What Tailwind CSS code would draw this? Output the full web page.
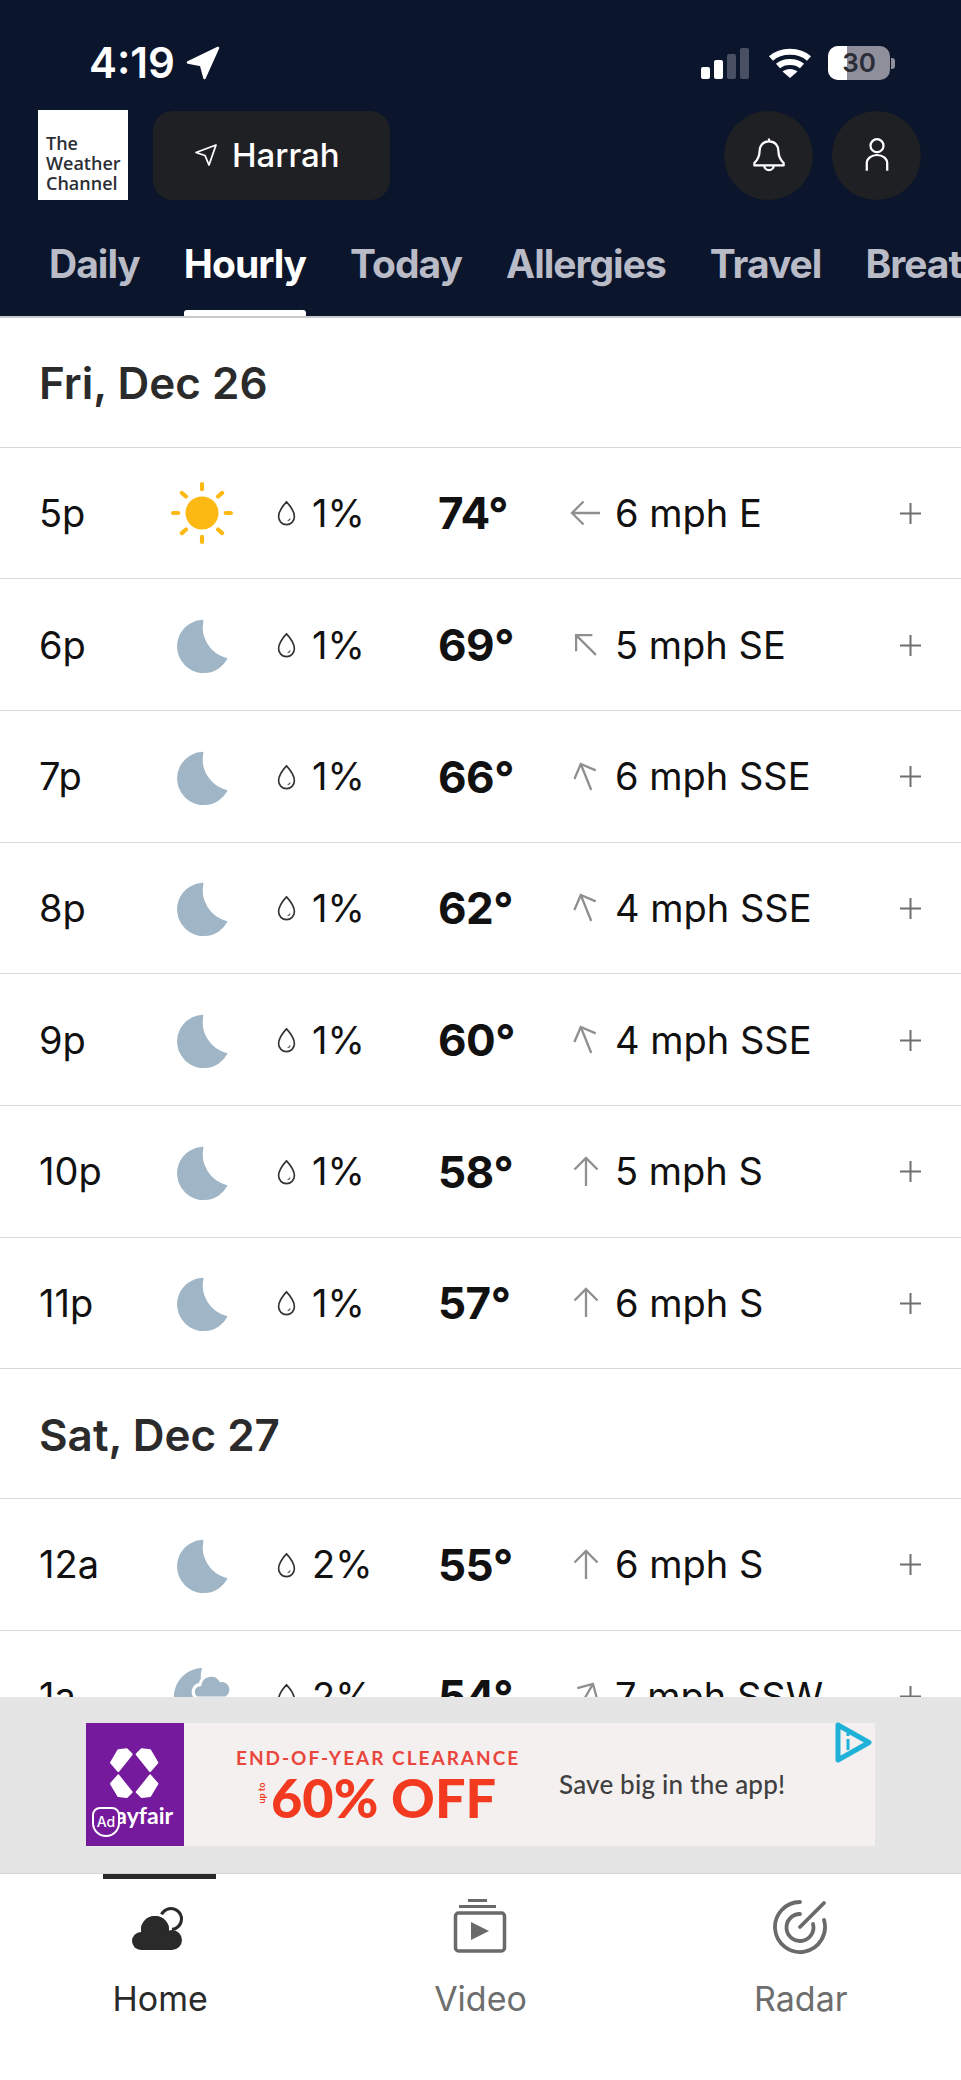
<!DOCTYPE html>
<html lang="en">
<head>
  <meta charset="UTF-8" />
  <meta name="viewport" content="width=device-width, initial-scale=1" />
  <title>Hourly Forecast</title>
  <script src="https://cdn.jsdelivr.net/npm/@tailwindcss/browser@4"></script>
</head>
<body class="bg-white font-['Inter',sans-serif]">
  <svg class="hidden">
    <symbol id="moon" viewBox="-3 -2 65 65">
      <path d="M30 5A27 27 0 1 0 55 45A34 34 0 0 1 30 5Z" fill="#a0b6c6" stroke="#a0b6c6" stroke-width="2" stroke-linejoin="round" />
    </symbol>
    <symbol id="sun" viewBox="2 2 60 60">
      <circle cx="32" cy="32" r="16" fill="#fdb913" />
      <g stroke="#fdb913" stroke-width="4" stroke-linecap="round">
        <path d="M32 4v5M32 55v5M4 32h5M55 32h5M12.5 12.5l4 3.5M47.500 48l4 3.500M12.500 51.500l4-3.500M47.500 16l4-3.500" />
      </g>
    </symbol>
    <symbol id="partly" viewBox="0 0 60 60">
      <path d="M30 3A28 28 0 1 0 55 45A34 34 0 0 1 30 3Z" fill="#a0b6c6" />
      <path d="M25 32a7 7 0 0 1 3-13a11 11 0 0 1 20-4a9 9 0 0 1 5 17Z" fill="#a0b6c6" stroke="#fff" stroke-width="3" />
    </symbol>
    <symbol id="drop" viewBox="0 0 20 28">
      <path d="M10 2C10 2 1.500 11 1.500 18a8.500 8.500 0 0 0 17 0C18.500 11 10 2 10 2Z" fill="none" stroke="#333" stroke-width="1.800" />
      <path d="M14 20q-.8 2-2.800 2.400" fill="none" stroke="#555" stroke-width="1.200" />
    </symbol>
    <symbol id="wind" viewBox="0 0 32 32">
      <path d="M16 2v28M4.500 13.500L16 2l11.500 11.500" fill="none" stroke="#8f8f8f" stroke-width="2.300" />
    </symbol>
  </svg>

  <div class="h-[2080px] w-[961px] overflow-hidden flex flex-col">
    <header class="bg-[#0b152b] pt-[46px] h-[318px] shrink-0 border-b-2 border-[#c9cace]">
      <div class="h-[34px] flex items-center justify-between pl-[89px] pr-[66px]">
        <div class="flex items-center gap-[11px] text-white">
          <span class="text-[42px] font-semibold leading-none">4:19</span>
          <svg class="w-[34px] h-[34px]" viewBox="0 0 34 34"><path d="M32 2L2 16.500L15 19L18.500 32Z" fill="#fff" stroke="#fff" stroke-width="2.500" stroke-linejoin="round" /></svg>
        </div>
        <div class="flex items-center gap-[16px]">
          <div class="flex items-end gap-[4px] h-[31px] mr-[3px]">
            <span class="w-[9px] h-[12px] rounded-[2px] bg-white"></span>
            <span class="w-[9px] h-[19px] rounded-[2px] bg-white"></span>
            <span class="w-[9px] h-[25px] rounded-[2px] bg-[#4a5063]"></span>
            <span class="w-[9px] h-[31px] rounded-[2px] bg-[#4a5063]"></span>
          </div>
          <svg class="w-[44px] h-[32px]" viewBox="0 0 44 32">
            <path d="M3 11.500C13 2.500 31 2.500 41 11.500M10 19C16 13.500 28 13.500 34 19" fill="none" stroke="#fff" stroke-width="6" />
            <path d="M22 31L14.500 24.500C18.500 21 25.500 21 29.500 24.500Z" fill="#fff" />
          </svg>
          <div class="flex items-center gap-[1px]">
            <div class="relative w-[62px] h-[34px] rounded-[10px] overflow-hidden bg-[#8e8f9a] flex items-center justify-center">
              <span class="absolute left-0 top-0 bottom-0 w-[19px] bg-white"></span>
              <span class="relative text-[#2a2c38] text-[26px] font-semibold leading-none">30</span>
            </div>
            <span class="w-[4px] h-[11px] rounded-r-[3px] bg-[#8e8f9a]"></span>
          </div>
        </div>
      </div>

      <div class="mt-[30px] h-[90px] flex items-center justify-between pl-[38px] pr-[40px]">
        <div class="flex items-center gap-[25px]">
          <div class="w-[90px] h-[90px] bg-white flex flex-col justify-end pl-[8px] pb-[7px] font-['Open_Sans',sans-serif] font-semibold text-[18px] leading-[20px] text-[#2b2e36]">
            <span>The</span>
            <span>Weather</span>
            <span>Channel</span>
          </div>
          <div class="w-[237px] h-[89px] rounded-[20px] bg-[#1f2024] flex items-center pl-[41px] gap-[14px] text-white">
            <svg class="w-[24px] h-[24px]" viewBox="0 0 24 24"><path d="M22 2L2 9.500L11 12.500L15 22Z" fill="none" stroke="#fff" stroke-width="1.800" stroke-linejoin="round" /></svg>
            <span class="text-[33px] font-medium leading-none">Harrah</span>
          </div>
        </div>
        <div class="flex items-center gap-[19px]">
          <div class="w-[89px] h-[89px] rounded-full bg-[#1f2024] flex items-center justify-center">
            <svg class="w-[34px] h-[36px]" viewBox="0 0 36 38" fill="none" stroke="#fff" stroke-width="2.400" stroke-linejoin="round">
              <path d="M18 1.500v3M18 4.500c-6.500 0-10 4.800-10 10.500c0 6-2 9-5.500 12.500v2.500h31v-2.500C30 24 28 21 28 15C28 9.300 24.500 4.500 18 4.500Z" />
              <path d="M13 30a5 5 0 0 0 10 0" />
            </svg>
          </div>
          <div class="w-[89px] h-[89px] rounded-full bg-[#1f2024] flex items-center justify-center">
            <svg class="w-[26px] h-[36px]" viewBox="0 0 28 38" fill="none" stroke="#fff" stroke-width="2.400">
              <circle cx="14" cy="9" r="7" />
              <path d="M3 36V28a11 9 0 0 1 22 0V36" />
            </svg>
          </div>
        </div>
      </div>

      <nav class="flex gap-[44px] pl-[49px] h-[116px] text-[39px] font-bold whitespace-nowrap overflow-hidden text-[#b9bcc7] tracking-[-1px]">
        <span class="pt-[12px] h-full flex items-center">Daily</span>
        <span class="relative pt-[12px] h-full flex items-center text-white">Hourly
          <span class="absolute left-0 right-0 bottom-0 h-[6px] rounded-t-[3px] bg-white"></span>
        </span>
        <span class="pt-[12px] h-full flex items-center">Today</span>
        <span class="pt-[12px] h-full flex items-center">Allergies</span>
        <span class="pt-[12px] h-full flex items-center">Travel</span>
        <span class="pt-[12px] h-full flex items-center">Breathing</span>
      </nav>
    </header>

    <main id="forecast" class="flex-1 min-h-0 overflow-hidden"></main>

    <aside class="relative h-[176px] shrink-0 bg-[#e5e5e6] pt-[26px] pl-[86px]">
      <div class="w-[789px] h-[123px] bg-[#f4f0f0] flex items-center">
        <div class="relative w-[98px] h-full bg-[#751a9c] shrink-0">
          <svg class="absolute left-[22px] top-[23px] w-[53px] h-[55px]" viewBox="0 0 53 55" fill="#fff" stroke="#fff" stroke-width="2" stroke-linejoin="round">
            <path d="M23.700 8.300L10.300 25L3 16.700L10.300 4.300L18.700 3.300Z" />
            <path d="M28.700 8.300L42.100 25L49.400 16.700L42.100 4.300L33.700 3.300Z" />
            <path d="M23.700 46.100L10.300 29.400L3 37.700L10.300 50.100L18.700 51.100Z" />
            <path d="M28.700 46.100L42.100 29.400L49.400 37.700L42.100 50.100L33.700 51.100Z" />
          </svg>
          <span class="absolute left-[11px] top-[78px] text-white font-['Lato',sans-serif] font-bold text-[23px] leading-[28px]">wayfair</span>
          <div class="absolute left-[6px] top-[84px] w-[28px] h-[30px] rounded-t-[8px] rounded-b-[14px] border-2 border-white bg-[#751a9c] flex items-center justify-center">
            <span class="text-white text-[14px] font-medium leading-none">Ad</span>
          </div>
        </div>
        <div class="w-[375px] pl-[52px] shrink-0 font-['Lato',sans-serif]">
          <div class="text-[19px] font-bold tracking-[2px] leading-[22px] mt-[4px] text-[#e9463d] whitespace-nowrap">END-OF-YEAR CLEARANCE</div>
          <div class="flex items-center mt-[1px] pl-[20px] text-[#f23a20]">
            <span class="-rotate-90 w-[10px] text-[9px] leading-none whitespace-nowrap font-bold">up to</span>
            <span class="text-[54px] font-black leading-[56px] ml-[5px] whitespace-nowrap">60% OFF</span>
          </div>
        </div>
        <span class="font-['Lato',sans-serif] text-[26px] tracking-[0.2px] text-[#3f3f3f] font-medium whitespace-nowrap">Save big in the app!</span>
      </div>
      <svg class="absolute left-[835px] top-[25px] w-[38px] h-[42px]" viewBox="0 0 38 42" fill="none" stroke="#1fb2d8">
        <path d="M3 3L34 20.500L3 38Z" stroke-width="5" stroke-linejoin="round" />
        <path d="M13 17v11M13 11v3" stroke-width="3" />
      </svg>
    </aside>

    <nav class="h-[207px] shrink-0 grid grid-cols-3 border-t border-[#d4d4d4] bg-white">
      <a class="relative flex flex-col items-center pt-[24px] text-[#2a2a2a]">
        <span class="absolute top-0 left-[103px] w-[113px] h-[5px] bg-[#2a2a2a]"></span>
        <svg class="w-[56px] h-[56px]" viewBox="2 -3 56 56" fill="#2a2a2a">
          <circle cx="41" cy="18" r="10.500" fill="none" stroke="#2a2a2a" stroke-width="3" />
          <circle cx="25" cy="29" r="15.500" stroke="#fff" stroke-width="3" />
          <circle cx="11" cy="40" r="9" />
          <circle cx="25" cy="29" r="14" />
          <circle cx="42" cy="39" r="10" />
          <rect x="11" y="34" width="31" height="15" />
        </svg>
        <span class="mt-[25px] text-[34px] leading-[40px]">Home</span>
      </a>
      <a class="flex flex-col items-center pt-[24px] text-[#6e6e6e]">
        <svg class="w-[56px] h-[56px]" viewBox="0 0 56 56">
          <path d="M16 2.500h19M7 8.500h37" stroke="#6a6a6a" stroke-width="3" />
          <rect x="3.500" y="15" width="49" height="38" rx="3" fill="none" stroke="#6a6a6a" stroke-width="3.500" />
          <path d="M19 24L37 33L19 42Z" fill="#6a6a6a" />
        </svg>
        <span class="mt-[25px] text-[34px] leading-[40px]">Video</span>
      </a>
      <a class="flex flex-col items-center pt-[24px] text-[#6e6e6e]">
        <svg class="w-[56px] h-[56px]" viewBox="0 0 56 56" fill="none" stroke="#6a6a6a" stroke-width="3.800" stroke-linecap="round">
          <path d="M27 4A25 25 0 1 0 51 22" />
          <path d="M27 16A13.500 13.500 0 1 0 40 26" />
          <path d="M27 29L51 5" />
        </svg>
        <span class="mt-[25px] text-[34px] leading-[40px]">Radar</span>
      </a>
    </nav>
  </div>

<script>
  const forecast = document.getElementById("forecast");

  const days = [
    { label: "Fri, Dec 26", hours: [
      ["5p", "sun", "1%", "74°", -90, "6 mph E"],
      ["6p", "moon", "1%", "69°", -45, "5 mph SE"],
      ["7p", "moon", "1%", "66°", -22, "6 mph SSE"],
      ["8p", "moon", "1%", "62°", -22, "4 mph SSE"],
      ["9p", "moon", "1%", "60°", -22, "4 mph SSE"],
      ["10p", "moon", "1%", "58°", 0, "5 mph S"],
      ["11p", "moon", "1%", "57°", 0, "6 mph S"],
    ]},
    { label: "Sat, Dec 27", hours: [
      ["12a", "moon", "2%", "55°", 0, "6 mph S"],
      ["1a", "partly", "2%", "54°", 30, "7 mph SSW"],
    ]},
  ];

  forecast.innerHTML = days.map((day) => `
    <h2 class="h-[129.5px] flex items-center pl-[39px] pt-[2px] border-b border-[#d8d8d8] text-[44px] font-semibold text-[#2b2b2b]">${day.label}</h2>
    ${day.hours.map(([time, icon, rain, temp, angle, wind]) => `
      <div class="h-[131.7px] flex items-center pl-[39px] pr-[40px] pt-[1px] border-b border-[#d8d8d8] text-[38px] text-[#111] whitespace-nowrap">
        <span class="w-[123px]">${time}</span>
        <span class="w-[80px] flex justify-center"><svg class="w-[62px] h-[62px]"><use href="#${icon}" /></svg></span>
        <span class="w-[196px] pl-[35px] flex items-center gap-[16px]"><svg class="w-[19px] h-[26px]"><use href="#drop" /></svg>${rain}</span>
        <span class="w-[132px] text-[44px] font-bold tracking-[-0.5px]">${temp}</span>
        <svg class="w-[32px] h-[32px]" style="transform: rotate(${angle}deg)"><use href="#wind" /></svg>
        <span class="ml-[13px]">${wind}</span>
        <svg class="ml-auto w-[21px] h-[21px]" viewBox="0 0 21 21"><path d="M10.500 0v21M0 10.500h21" stroke="#6f6f6f" stroke-width="2" /></svg>
      </div>
    `).join("")}
  `).join("");
</script>
</body>
</html>
